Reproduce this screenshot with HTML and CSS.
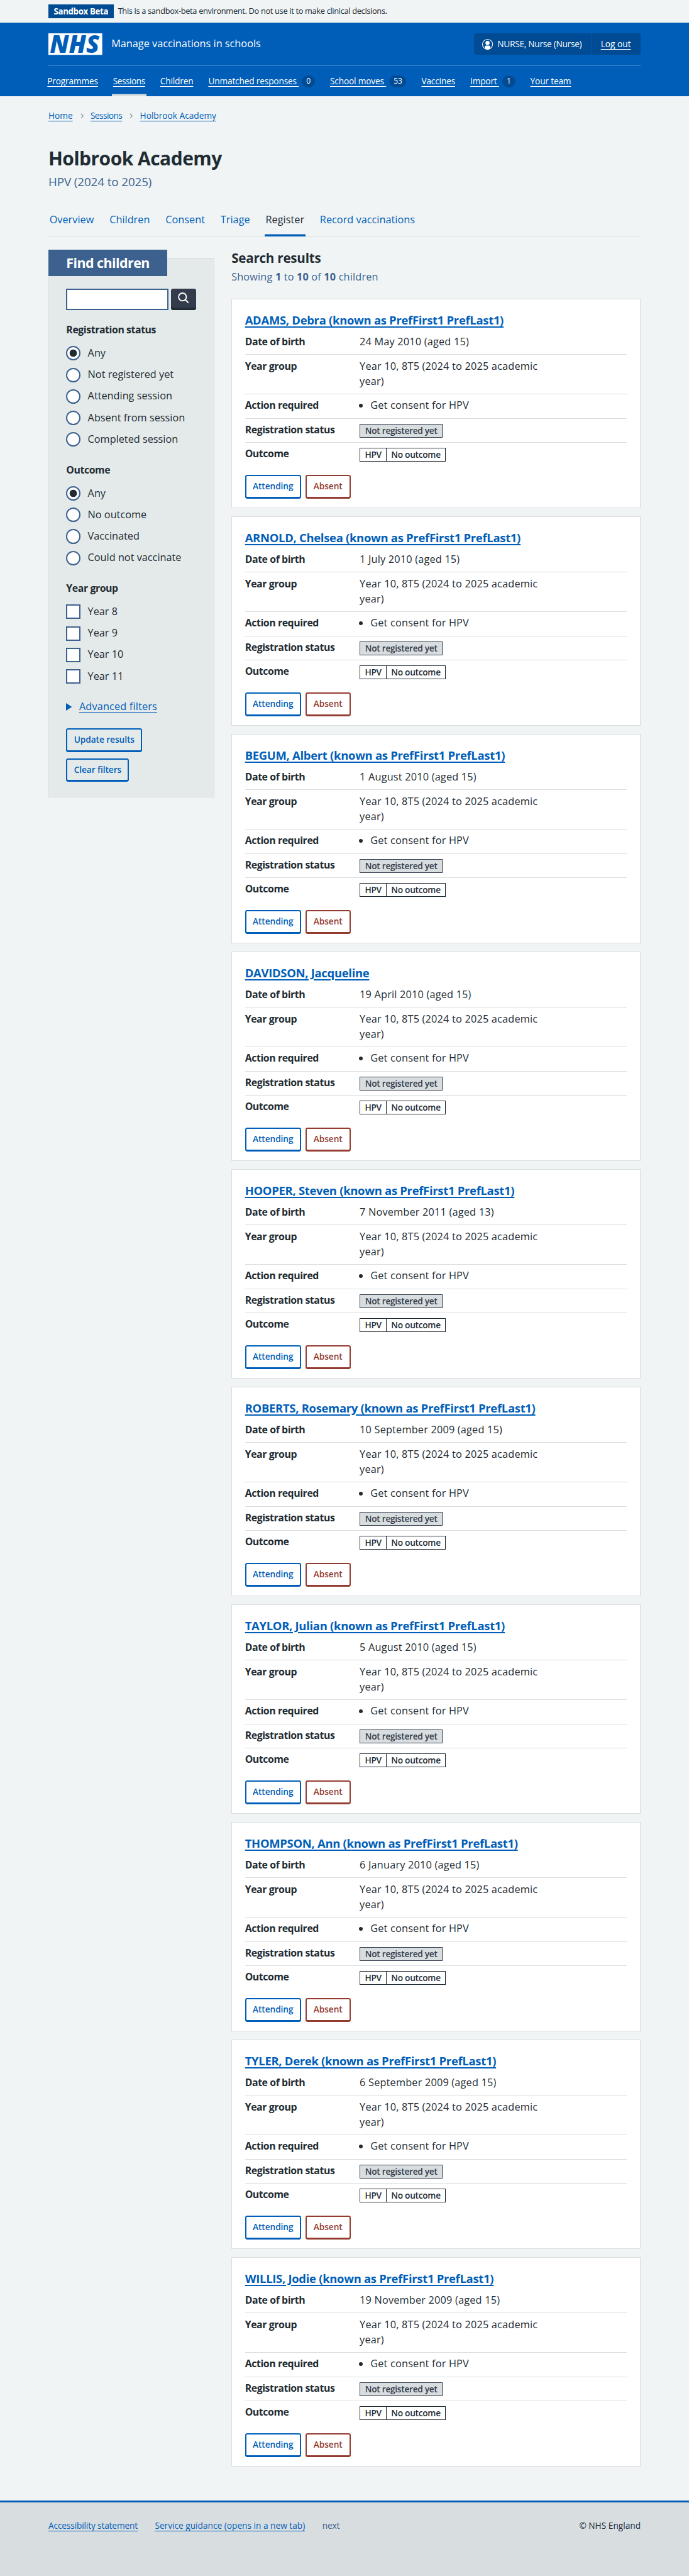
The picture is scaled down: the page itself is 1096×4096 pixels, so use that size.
FILE: index.html
```html
<!DOCTYPE html>
<html lang="en">
<head>
<meta charset="utf-8">
<title>Holbrook Academy – Manage vaccinations in schools</title>
<link rel="stylesheet" href="styles.css">
</head>
<body>
<div class="env"><div class="container env-row"><strong class="env-tag">Sandbox Beta</strong><span class="env-text">This is a sandbox-beta environment. Do not use it to make clinical decisions.</span></div></div>
<header class="header">
<div class="container">
<div class="header-top">
<svg class="logo" viewBox="0 0 100 40"><rect width="100" height="40" fill="#fff"/><text class="logo-text" x="2.5" y="36.5" textLength="92" lengthAdjust="spacingAndGlyphs">NHS</text></svg>
<span class="service">Manage vaccinations in schools</span>
<div class="account">
<span class="account-user"><svg class="user-icon" viewBox="0 0 20 20"><circle cx="10" cy="10" r="9.4" fill="none" stroke="#fff" stroke-width="1.2"/><circle cx="10" cy="7.4" r="3.9" fill="#fff"/><path d="M4.6 17.4v-1.6a3.4 3.4 0 0 1 3.4-3.4h4a3.4 3.4 0 0 1 3.4 3.4v1.6A9.4 9.4 0 0 1 10 19.4a9.4 9.4 0 0 1-5.4-2z" fill="#fff"/></svg>NURSE, Nurse (Nurse)</span>
<span class="account-out"><a href="#">Log out</a></span>
</div>
</div>
<nav class="nav">
<div class="nav-item"><a href="#">Programmes</a></div>
<div class="nav-item current"><a href="#">Sessions</a></div>
<div class="nav-item"><a href="#">Children</a></div>
<div class="nav-item"><a href="#">Unmatched responses&nbsp;</a><span class="count">0</span></div>
<div class="nav-item"><a href="#">School moves&nbsp;</a><span class="count">53</span></div>
<div class="nav-item"><a href="#">Vaccines</a></div>
<div class="nav-item"><a href="#">Import&nbsp;</a><span class="count">1</span></div>
<div class="nav-item"><a href="#">Your team</a></div>
</nav>
</div>
</header>
<main class="container">
<nav class="crumbs"><a href="#">Home</a><svg class="chev" viewBox="0 0 6 10"><path d="M1 .8 5 5 1 9.2"/></svg><a class="tight" href="#">Sessions</a><svg class="chev" viewBox="0 0 6 10"><path d="M1 .8 5 5 1 9.2"/></svg><a href="#">Holbrook Academy</a></nav>
<h1 class="title">Holbrook Academy</h1>
<p class="caption">HPV (2024 to 2025)</p>
<nav class="tabs"><a href="#">Overview</a><a href="#">Children</a><a href="#">Consent</a><a href="#">Triage</a><a class="current" href="#">Register</a><a href="#">Record vaccinations</a></nav>
<div class="columns">
<form class="panel">
<h2 class="panel-label">Find children</h2>
<div class="search"><input class="search-input" type="text" aria-label="Search"><button class="search-button" type="button" aria-label="Search"><svg viewBox="0 0 22 24"><circle cx="8.5" cy="9.5" r="7.2"/><path d="m13.6 14.6 6 5.8"/></svg></button></div>
<h3 class="group">Registration status</h3>
<label class="option"><span class="radio checked"></span>Any</label>
<label class="option"><span class="radio"></span>Not registered yet</label>
<label class="option"><span class="radio"></span>Attending session</label>
<label class="option"><span class="radio"></span>Absent from session</label>
<label class="option"><span class="radio"></span>Completed session</label>
<h3 class="group">Outcome</h3>
<label class="option"><span class="radio checked"></span>Any</label>
<label class="option"><span class="radio"></span>No outcome</label>
<label class="option"><span class="radio"></span>Vaccinated</label>
<label class="option"><span class="radio"></span>Could not vaccinate</label>
<h3 class="group">Year group</h3>
<label class="option"><span class="check"></span>Year 8</label>
<label class="option"><span class="check"></span>Year 9</label>
<label class="option"><span class="check"></span>Year 10</label>
<label class="option"><span class="check"></span>Year 11</label>
<div class="advanced"><svg class="arrow" viewBox="0 0 11 14"><path d="M0 0 11 7 0 14z"/></svg><a href="#">Advanced filters</a></div>
<div class="panel-actions"><button class="button" type="button">Update results</button><button class="button" type="button">Clear filters</button></div>
</form>
<section class="results">
<h2 class="results-title">Search results</h2>
<p class="results-count">Showing <b>1</b> to <b>10</b> of <b>10</b> children</p>
<article class="card"><h3 class="name"><a href="#">ADAMS, Debra (known as PrefFirst1 PrefLast1)</a></h3>
<dl class="rows"><div><dt>Date of birth</dt><dd>24 May 2010 (aged 15)</dd></div><div class="tall"><dt>Year group</dt><dd>Year 10, 8T5 (2024 to 2025 academic year)</dd></div><div><dt>Action required</dt><dd><ul><li>Get consent for HPV</li></ul></dd></div><div><dt>Registration status</dt><dd><span class="tag grey">Not registered yet</span></dd></div><div><dt>Outcome</dt><dd><span class="tag"><span>HPV</span><span>No outcome</span></span></dd></div></dl>
<div class="actions"><button class="button" type="button">Attending</button><button class="button warn" type="button">Absent</button></div></article>
<article class="card"><h3 class="name"><a href="#">ARNOLD, Chelsea (known as PrefFirst1 PrefLast1)</a></h3>
<dl class="rows"><div><dt>Date of birth</dt><dd>1 July 2010 (aged 15)</dd></div><div class="tall"><dt>Year group</dt><dd>Year 10, 8T5 (2024 to 2025 academic year)</dd></div><div><dt>Action required</dt><dd><ul><li>Get consent for HPV</li></ul></dd></div><div><dt>Registration status</dt><dd><span class="tag grey">Not registered yet</span></dd></div><div><dt>Outcome</dt><dd><span class="tag"><span>HPV</span><span>No outcome</span></span></dd></div></dl>
<div class="actions"><button class="button" type="button">Attending</button><button class="button warn" type="button">Absent</button></div></article>
<article class="card"><h3 class="name"><a href="#">BEGUM, Albert (known as PrefFirst1 PrefLast1)</a></h3>
<dl class="rows"><div><dt>Date of birth</dt><dd>1 August 2010 (aged 15)</dd></div><div class="tall"><dt>Year group</dt><dd>Year 10, 8T5 (2024 to 2025 academic year)</dd></div><div><dt>Action required</dt><dd><ul><li>Get consent for HPV</li></ul></dd></div><div><dt>Registration status</dt><dd><span class="tag grey">Not registered yet</span></dd></div><div><dt>Outcome</dt><dd><span class="tag"><span>HPV</span><span>No outcome</span></span></dd></div></dl>
<div class="actions"><button class="button" type="button">Attending</button><button class="button warn" type="button">Absent</button></div></article>
<article class="card"><h3 class="name"><a href="#">DAVIDSON, Jacqueline</a></h3>
<dl class="rows"><div><dt>Date of birth</dt><dd>19 April 2010 (aged 15)</dd></div><div class="tall"><dt>Year group</dt><dd>Year 10, 8T5 (2024 to 2025 academic year)</dd></div><div><dt>Action required</dt><dd><ul><li>Get consent for HPV</li></ul></dd></div><div><dt>Registration status</dt><dd><span class="tag grey">Not registered yet</span></dd></div><div><dt>Outcome</dt><dd><span class="tag"><span>HPV</span><span>No outcome</span></span></dd></div></dl>
<div class="actions"><button class="button" type="button">Attending</button><button class="button warn" type="button">Absent</button></div></article>
<article class="card"><h3 class="name"><a href="#">HOOPER, Steven (known as PrefFirst1 PrefLast1)</a></h3>
<dl class="rows"><div><dt>Date of birth</dt><dd>7 November 2011 (aged 13)</dd></div><div class="tall"><dt>Year group</dt><dd>Year 10, 8T5 (2024 to 2025 academic year)</dd></div><div><dt>Action required</dt><dd><ul><li>Get consent for HPV</li></ul></dd></div><div><dt>Registration status</dt><dd><span class="tag grey">Not registered yet</span></dd></div><div><dt>Outcome</dt><dd><span class="tag"><span>HPV</span><span>No outcome</span></span></dd></div></dl>
<div class="actions"><button class="button" type="button">Attending</button><button class="button warn" type="button">Absent</button></div></article>
<article class="card"><h3 class="name"><a href="#">ROBERTS, Rosemary (known as PrefFirst1 PrefLast1)</a></h3>
<dl class="rows"><div><dt>Date of birth</dt><dd>10 September 2009 (aged 15)</dd></div><div class="tall"><dt>Year group</dt><dd>Year 10, 8T5 (2024 to 2025 academic year)</dd></div><div><dt>Action required</dt><dd><ul><li>Get consent for HPV</li></ul></dd></div><div><dt>Registration status</dt><dd><span class="tag grey">Not registered yet</span></dd></div><div><dt>Outcome</dt><dd><span class="tag"><span>HPV</span><span>No outcome</span></span></dd></div></dl>
<div class="actions"><button class="button" type="button">Attending</button><button class="button warn" type="button">Absent</button></div></article>
<article class="card"><h3 class="name"><a href="#">TAYLOR, Julian (known as PrefFirst1 PrefLast1)</a></h3>
<dl class="rows"><div><dt>Date of birth</dt><dd>5 August 2010 (aged 15)</dd></div><div class="tall"><dt>Year group</dt><dd>Year 10, 8T5 (2024 to 2025 academic year)</dd></div><div><dt>Action required</dt><dd><ul><li>Get consent for HPV</li></ul></dd></div><div><dt>Registration status</dt><dd><span class="tag grey">Not registered yet</span></dd></div><div><dt>Outcome</dt><dd><span class="tag"><span>HPV</span><span>No outcome</span></span></dd></div></dl>
<div class="actions"><button class="button" type="button">Attending</button><button class="button warn" type="button">Absent</button></div></article>
<article class="card"><h3 class="name"><a href="#">THOMPSON, Ann (known as PrefFirst1 PrefLast1)</a></h3>
<dl class="rows"><div><dt>Date of birth</dt><dd>6 January 2010 (aged 15)</dd></div><div class="tall"><dt>Year group</dt><dd>Year 10, 8T5 (2024 to 2025 academic year)</dd></div><div><dt>Action required</dt><dd><ul><li>Get consent for HPV</li></ul></dd></div><div><dt>Registration status</dt><dd><span class="tag grey">Not registered yet</span></dd></div><div><dt>Outcome</dt><dd><span class="tag"><span>HPV</span><span>No outcome</span></span></dd></div></dl>
<div class="actions"><button class="button" type="button">Attending</button><button class="button warn" type="button">Absent</button></div></article>
<article class="card"><h3 class="name"><a href="#">TYLER, Derek (known as PrefFirst1 PrefLast1)</a></h3>
<dl class="rows"><div><dt>Date of birth</dt><dd>6 September 2009 (aged 15)</dd></div><div class="tall"><dt>Year group</dt><dd>Year 10, 8T5 (2024 to 2025 academic year)</dd></div><div><dt>Action required</dt><dd><ul><li>Get consent for HPV</li></ul></dd></div><div><dt>Registration status</dt><dd><span class="tag grey">Not registered yet</span></dd></div><div><dt>Outcome</dt><dd><span class="tag"><span>HPV</span><span>No outcome</span></span></dd></div></dl>
<div class="actions"><button class="button" type="button">Attending</button><button class="button warn" type="button">Absent</button></div></article>
<article class="card"><h3 class="name"><a href="#">WILLIS, Jodie (known as PrefFirst1 PrefLast1)</a></h3>
<dl class="rows"><div><dt>Date of birth</dt><dd>19 November 2009 (aged 15)</dd></div><div class="tall"><dt>Year group</dt><dd>Year 10, 8T5 (2024 to 2025 academic year)</dd></div><div><dt>Action required</dt><dd><ul><li>Get consent for HPV</li></ul></dd></div><div><dt>Registration status</dt><dd><span class="tag grey">Not registered yet</span></dd></div><div><dt>Outcome</dt><dd><span class="tag"><span>HPV</span><span>No outcome</span></span></dd></div></dl>
<div class="actions"><button class="button" type="button">Attending</button><button class="button warn" type="button">Absent</button></div></article>
</section>
</div>
</main>
<footer class="footer"><div class="container footer-row"><a class="snug" href="#">Accessibility statement</a><a href="#">Service guidance (opens in a new tab)</a><span class="branch snug">next</span><span class="copyright">© NHS England</span></div></footer>
</body>
</html>
```
FILE: styles.css
```css
* { box-sizing: border-box; }
html { font-size: 8.5645px; background: #d8dde0; }
body {
  margin: 0;
  background: #f0f4f5;
  color: #212b32;
  font: 400 1.9rem/2.8rem "Open Sans", "Noto Sans", sans-serif;
  text-underline-offset: 0.3rem;
}
h1, h2, h3, p, dl, dd, ul { margin: 0; padding: 0; }
a { color: #005eb8; text-decoration-thickness: 1px; }
.container { width: 110rem; margin: 0 auto; }
.tight { letter-spacing: -0.04em; }
.snug { letter-spacing: -0.01em; }

.env-row { display: flex; align-items: center; height: 4.2rem; gap: 0.8rem; font-size: 1.5rem; }
.env-tag { height: 2.6rem; line-height: 2.6rem; padding: 0 1rem; background: #004b93; color: #fff; font-size: 1.55rem; font-weight: 700; letter-spacing: -0.025em; }
.env-text { letter-spacing: -0.026em; }

.header { background: #005eb8; color: #fff; }
.header a { color: #fff; }
.header-top { display: flex; align-items: center; height: 8.1rem; border-bottom: 1px solid #4588ca; }
.logo { width: 10rem; height: 4rem; overflow: visible; }
.logo-text { font: italic 800 46px "Open Sans", sans-serif; fill: #005eb8; }
.service { margin-left: 1.7rem; font-size: 1.9rem; }
.account { display: flex; height: 4rem; margin-left: auto; border-radius: 0.4rem; background: #004b93; font-size: 1.6rem; line-height: 4rem; }
.account-user { display: flex; align-items: center; gap: 0.8rem; width: 22rem; padding-left: 1.6rem; border-right: 1px solid #005eb8; white-space: nowrap; letter-spacing: -0.02em; }
.user-icon { width: 2rem; height: 2rem; }
.account-out { width: 9rem; padding-left: 1.6rem; }
.nav { display: flex; gap: 2.4rem; height: 5.6rem; margin-left: -0.4rem; font-size: 1.6rem; letter-spacing: -0.012em; }
.nav-item { display: flex; align-items: center; padding: 0 0.2rem; white-space: nowrap; }
.nav-item.current { box-shadow: inset 0 -0.4rem #d8dde0; letter-spacing: -0.035em; }
.count { min-width: 2.4rem; height: 2.2rem; margin-left: 0.6rem; padding: 0 0.8rem; border-radius: 1.1rem; background: #004b93; font-size: 1.4rem; line-height: 2.2rem; text-align: center; }

.crumbs { display: flex; align-items: center; padding-top: 2.4rem; font-size: 1.6rem; line-height: 2.4rem; }
.chev { width: 0.6rem; height: 1rem; margin: 0 1.3rem 0 1.4rem; fill: none; stroke: #8f9aa3; stroke-width: 1.5; }
.title { margin-top: 4.7rem; font-size: 3.5rem; line-height: 4rem; font-weight: 700; letter-spacing: -0.017em; }
.caption { margin-top: 0.8rem; font-size: 2.2rem; line-height: 3.2rem; color: #3d618f; letter-spacing: -0.006em; }
.tabs { display: flex; gap: 2.5rem; height: 6.3rem; margin-top: 2.2rem; line-height: 6.4rem; box-shadow: inset 0 -1px #d8dde0; letter-spacing: 0.001em; }
.tabs a { padding: 0 0.2rem; text-decoration: none; }
.tabs .current { color: #212b32; box-shadow: inset 0 -0.4rem #005eb8; }

.columns { display: flex; align-items: flex-start; gap: 3.2rem; padding-top: 2.5rem; }
.panel { width: 30.8rem; margin-top: 1.5rem; padding: 0 3.2rem 2.8rem; border: 1px solid #d8dde0; background: #e4e9e9; }
.panel-label { width: 22.1rem; height: 4.8rem; margin: -1.6rem 0 2.4rem calc(-3.2rem - 1px); padding-left: 3.3rem; background: #3d618f; color: #fff; font-size: 2.5rem; line-height: 4.8rem; font-weight: 700; letter-spacing: -0.025em; }
.search { display: flex; gap: 0.4rem; }
.search-input { width: 19rem; height: 4rem; padding: 0 0.4rem; border: 2px solid #3d618f; background: #fff; }
.search-button { width: 4.8rem; height: 4rem; padding: 0 0 0.4rem; border: 0; border-radius: 0.4rem; background: #333c4c; box-shadow: inset 0 -0.4rem #212b32; line-height: 0; }
.search-button svg { width: 2.2rem; height: 2.4rem; fill: none; stroke: #fff; stroke-width: 2.2; }
.group { margin: 2.3rem 0 0.9rem; font-size: 1.85rem; line-height: 2.8rem; font-weight: 700; letter-spacing: -0.026em; }
.option { display: flex; align-items: center; gap: 1.3rem; height: 4rem; }
.radio, .check { width: 2.7rem; height: 2.7rem; border: 2px solid #3d618f; background: #fff; }
.radio { border-radius: 50%; }
.radio.checked { background: radial-gradient(circle, #212b32 5.5px, #fff 6.2px); }
.advanced { display: flex; align-items: center; gap: 1.3rem; margin-top: 2.3rem; letter-spacing: 0.01em; }
.arrow { width: 1.1rem; height: 1.4rem; fill: #005eb8; }
.panel-actions { display: flex; flex-direction: column; align-items: flex-start; gap: 1.2rem; margin-top: 2.5rem; }
.button { height: 4.4rem; padding: 0 1.2rem 0.2rem; border: 2px solid #005eb8; border-bottom-width: 3px; border-radius: 0.4rem; background: transparent; color: #005eb8; font: 600 1.6rem "Open Sans", sans-serif; letter-spacing: -0.004em; white-space: nowrap; }
.button.warn { padding: 0 1.3rem 0.2rem; border-color: #943b30; color: #943b30; }

.results { width: 76rem; }
.results-title { margin-top: -0.1rem; font-size: 2.4rem; line-height: 3.2rem; font-weight: 700; letter-spacing: -0.01em; }
.results-count { margin: 0.6rem 0 2.6rem; color: #3d618f; letter-spacing: 0.01em; }
.results-count b { font-weight: 700; }
.card { height: 38.8rem; margin-bottom: 1.6rem; padding: 2.4rem 2.4rem 0; border: 1px solid #d8dde0; background: #fff; }
.name { font-size: 2.15rem; font-weight: 700; line-height: 2.8rem; letter-spacing: -0.015em; }
.name a { text-decoration-thickness: 2px; }
.rows { margin: 0.6rem 0 1.6rem; letter-spacing: 0.012em; }
.rows > div { display: flex; height: 4.5rem; padding-top: 0.75rem; border-bottom: 1px solid #d8dde0; }
.rows > .tall { height: 7.3rem; }
.rows > div:last-child { height: 4.4rem; border-bottom: 0; }
.rows dt { width: 21.3rem; font-size: 1.85rem; font-weight: 700; letter-spacing: -0.026em; }
.rows dd { width: 34.2rem; }
.rows ul { padding-left: 2rem; }
.tag { display: flex; width: max-content; height: 2.6rem; margin: 0.2rem 0 0; border: 1px solid #212b32; font-size: 1.6rem; line-height: 2.4rem; font-weight: 600; letter-spacing: -0.02em; }
.tag.grey { padding: 0 0.9rem; border-color: #333c4c; background: #d8dde0; color: #333c4c; }
.tag span { padding: 0 0.85rem; }
.tag span + span { border-left: 1px solid #212b32; }
.actions { display: flex; gap: 0.8rem; }

.footer { margin-top: 4.7rem; height: 14rem; padding-top: 3.2rem; border-top: 0.4rem solid #005eb8; background: #d8dde0; font-size: 1.6rem; line-height: 2.4rem; }
.footer-row { display: flex; gap: 3.2rem; }
.branch { color: #3d618f; }
.copyright { margin-left: auto; }
```
